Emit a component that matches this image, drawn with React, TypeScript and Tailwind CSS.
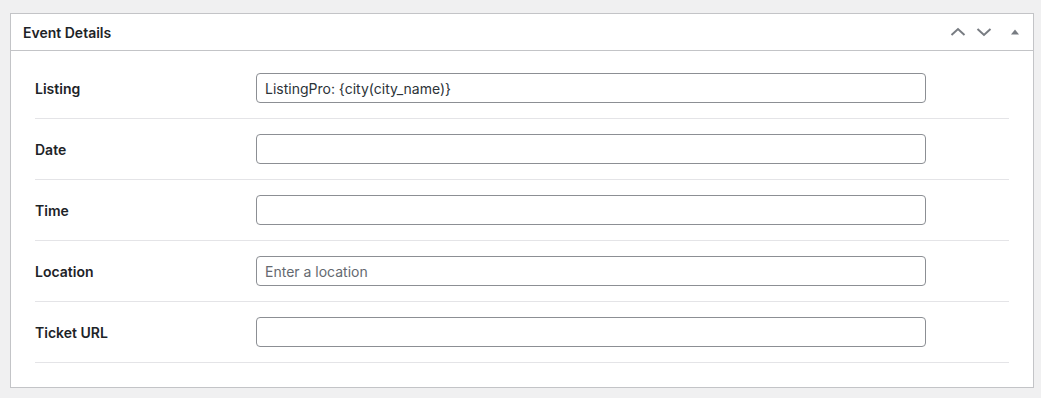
import React from "react";

const rows = [
  { label: "Listing", value: "ListingPro: {city(city_name)}", placeholder: "" },
  { label: "Date", value: "", placeholder: "" },
  { label: "Time", value: "", placeholder: "" },
  { label: "Location", value: "", placeholder: "Enter a location" },
  { label: "Ticket URL", value: "", placeholder: "" },
];

export default function App() {
  return (
    <div
      className="w-[1041px] h-[398px] bg-[#f0f0f1] pt-[13px] pl-[10px] text-[14px] text-[#1d2327]"
      style={{ fontFamily: "Inter, 'Noto Sans', sans-serif" }}
    >
      <div className="w-[1024px] h-[375px] bg-white border border-[#c3c4c7]">
        <div className="h-[37px] border-b border-[#c3c4c7] flex items-center pl-[12px] pr-[14px]">
          <h2 className="font-semibold text-[14px] text-[#1d2327] flex-1">Event Details</h2>
          <div className="flex items-center">
            <svg width="16" height="10" viewBox="0 0 16 10" className="mr-[10px]">
              <path d="M1.5 8 L8 2 L14.5 8" fill="none" stroke="#787c82" strokeWidth="2" />
            </svg>
            <svg width="16" height="10" viewBox="0 0 16 10" className="mr-[19px]">
              <path d="M1.5 2 L8 8 L14.5 2" fill="none" stroke="#787c82" strokeWidth="2" />
            </svg>
            <svg width="8" height="6" viewBox="0 0 8 6">
              <path d="M0 5.5 L4 0.5 L8 5.5 Z" fill="#787c82" />
            </svg>
          </div>
        </div>
        <div className="px-[24px] pt-[7px]">
          {rows.map((r) => (
            <div key={r.label} className="flex items-center h-[61px] border-b border-[#e4e4e7]">
              <div className="w-[221px] font-semibold text-[#1d2327]">{r.label}</div>
              <input
                readOnly
                value={r.value}
                placeholder={r.placeholder}
                className="w-[670px] h-[30px] border border-[#8c8f94] rounded-[4px] px-[8px] text-[14px] text-[#2c3338] placeholder:text-[#646970] outline-none bg-white"
                style={{ fontFamily: "Inter, 'Noto Sans', sans-serif" }}
              />
            </div>
          ))}
        </div>
      </div>
    </div>
  );
}
